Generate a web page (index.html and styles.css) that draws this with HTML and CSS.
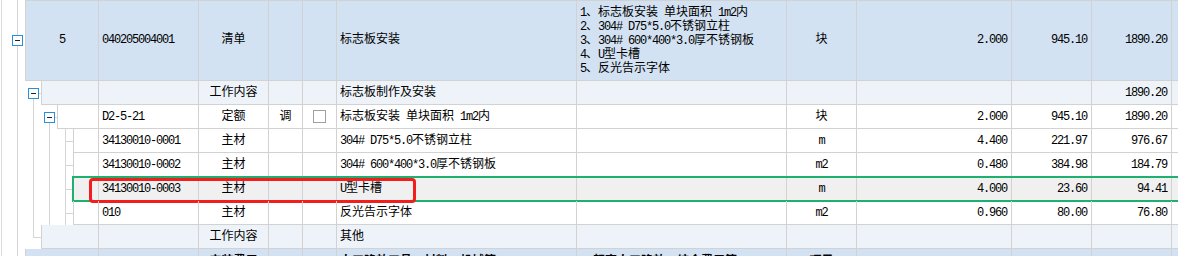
FILE: index.html
```html
<!DOCTYPE html>
<html lang="zh-CN">
<head>
  <meta charset="UTF-8">
  <title>分部分项</title>
  <link rel="stylesheet" href="styles.css">
</head>
<body>
  <div class="grid">
    <!-- 清单行 -->
    <div class="row head l1">
      <div class="tree"><span class="slot v"><i class="fold"></i></span></div>
      <div class="body">
        <div class="c no en">5</div>
        <div class="c code en">040205004001</div>
        <div class="c type">清单</div>
        <div class="c adj"></div>
        <div class="c chk"></div>
        <div class="c name">标志板安装</div>
        <div class="c spec">
          <div><span class="en">1</span>、标志板安装<span class="en"> </span>单块面积<span class="en"> 1m2</span>内</div>
          <div><span class="en">2</span>、<span class="en">304# D75*5.0</span>不锈钢立柱</div>
          <div><span class="en">3</span>、<span class="en">304# 600*400*3.0</span>厚不锈钢板</div>
          <div><span class="en">4</span>、<span class="en">U</span>型卡槽</div>
          <div><span class="en">5</span>、反光告示字体</div>
        </div>
        <div class="c unit">块</div>
        <div class="c qty en">2.000</div>
        <div class="c price en">945.10</div>
        <div class="c total en">1890.20</div>
        <div class="c rest"></div>
      </div>
    </div>

    <div class="row work l2">
      <div class="tree"><span class="slot v"></span><span class="slot dt"><i class="fold"></i></span></div>
      <div class="body">
        <div class="c no"></div>
        <div class="c code"></div>
        <div class="c type">工作内容</div>
        <div class="c adj"></div>
        <div class="c chk"></div>
        <div class="c name">标志板制作及安装</div>
        <div class="c spec"></div>
        <div class="c unit"></div>
        <div class="c qty"></div>
        <div class="c price"></div>
        <div class="c total en">1890.20</div>
        <div class="c rest"></div>
      </div>
    </div>

    <div class="row l3">
      <div class="tree"><span class="slot v"></span><span class="slot v"></span><span class="slot dt"><i class="fold"></i></span></div>
      <div class="body">
        <div class="c no"></div>
        <div class="c code en">D2-5-21</div>
        <div class="c type">定额</div>
        <div class="c adj">调</div>
        <div class="c chk"><i class="box"></i></div>
        <div class="c name">标志板安装<span class="en"> </span>单块面积<span class="en"> 1m2</span>内</div>
        <div class="c spec"></div>
        <div class="c unit">块</div>
        <div class="c qty en">2.000</div>
        <div class="c price en">945.10</div>
        <div class="c total en">1890.20</div>
        <div class="c rest"></div>
      </div>
    </div>

    <div class="row l4">
      <div class="tree"><span class="slot v"></span><span class="slot v"></span><span class="slot v"></span><span class="slot vt"></span></div>
      <div class="body">
        <div class="c no"></div>
        <div class="c code en">34130010-0001</div>
        <div class="c type">主材</div>
        <div class="c adj"></div>
        <div class="c chk"></div>
        <div class="c name"><span class="en">304# D75*5.0</span>不锈钢立柱</div>
        <div class="c spec"></div>
        <div class="c unit en">m</div>
        <div class="c qty en">4.400</div>
        <div class="c price en">221.97</div>
        <div class="c total en">976.67</div>
        <div class="c rest"></div>
      </div>
    </div>

    <div class="row l4">
      <div class="tree"><span class="slot v"></span><span class="slot v"></span><span class="slot v"></span><span class="slot vt"></span></div>
      <div class="body">
        <div class="c no"></div>
        <div class="c code en">34130010-0002</div>
        <div class="c type">主材</div>
        <div class="c adj"></div>
        <div class="c chk"></div>
        <div class="c name"><span class="en">304# 600*400*3.0</span>厚不锈钢板</div>
        <div class="c spec"></div>
        <div class="c unit en">m2</div>
        <div class="c qty en">0.480</div>
        <div class="c price en">384.98</div>
        <div class="c total en">184.79</div>
        <div class="c rest"></div>
      </div>
    </div>

    <div class="row sel l4">
      <div class="tree"><span class="slot v"></span><span class="slot v"></span><span class="slot v"></span><span class="slot vt"></span></div>
      <div class="body">
        <div class="c no"></div>
        <div class="c code en">34130010-0003</div>
        <div class="c type">主材</div>
        <div class="c adj"></div>
        <div class="c chk"></div>
        <div class="c name"><span class="en">U</span>型卡槽</div>
        <div class="c spec"></div>
        <div class="c unit en">m</div>
        <div class="c qty en">4.000</div>
        <div class="c price en">23.60</div>
        <div class="c total en">94.41</div>
        <div class="c rest"></div>
      </div>
      <div class="mark"></div>
    </div>

    <div class="row l4">
      <div class="tree"><span class="slot v"></span><span class="slot v"></span><span class="slot v"></span><span class="slot vt"></span></div>
      <div class="body">
        <div class="c no"></div>
        <div class="c code en">010</div>
        <div class="c type">主材</div>
        <div class="c adj"></div>
        <div class="c chk"></div>
        <div class="c name">反光告示字体</div>
        <div class="c spec"></div>
        <div class="c unit en">m2</div>
        <div class="c qty en">0.960</div>
        <div class="c price en">80.00</div>
        <div class="c total en">76.80</div>
        <div class="c rest"></div>
      </div>
    </div>

    <div class="row work l2">
      <div class="tree"><span class="slot v"></span><span class="slot ut"></span></div>
      <div class="body">
        <div class="c no"></div>
        <div class="c code"></div>
        <div class="c type">工作内容</div>
        <div class="c adj"></div>
        <div class="c chk"></div>
        <div class="c name">其他</div>
        <div class="c spec"></div>
        <div class="c unit"></div>
        <div class="c qty"></div>
        <div class="c price"></div>
        <div class="c total"></div>
        <div class="c rest"></div>
      </div>
    </div>

    <!-- 下一条清单，只露出顶部 -->
    <div class="row head tail l1">
      <div class="tree"><span class="slot v"></span></div>
      <div class="body">
        <div class="c no"></div>
        <div class="c code"></div>
        <div class="c type">安装费用</div>
        <div class="c adj"></div>
        <div class="c chk"></div>
        <div class="c name">人工降效工具、材料、机械等</div>
        <div class="c spec">超高人工降效、综合费用等</div>
        <div class="c unit">项目</div>
        <div class="c qty"></div>
        <div class="c price"></div>
        <div class="c total"></div>
        <div class="c rest"></div>
      </div>
    </div>
  </div>
</body>
</html>
```

FILE: styles.css
```css
html, body {
  margin: 0;
  padding: 0;
  height: 256px;
  overflow: hidden;
  background-color: #fff;
}
body {
  font-family: "Liberation Mono", "Noto Sans CJK SC", monospace;
  font-size: 12px;
  color: #000;
}
.grid {
  width: 1200px;
}
.row {
  display: flex;
  height: 24px;
  position: relative;
}
.row.head {
  height: 81px;
}
.l1 { --t: 25px; }
.l2 { --t: 41px; }
.l3 { --t: 57px; }
.l4 { --t: 73px; }

/* 树形引导线 */
.tree {
  flex: none;
  width: var(--t);
  box-sizing: border-box;
  padding-left: 9px;
  display: flex;
  background: linear-gradient(#dcdcdc, #dcdcdc) 1px 0 / 1px 100% no-repeat;
}
.slot {
  flex: none;
  width: 16px;
  box-sizing: border-box;
  padding-left: 3px;
  display: flex;
  align-items: center;
  background-repeat: no-repeat;
}
.slot.v {
  background-image: linear-gradient(#d6d6d6, #d6d6d6);
  background-position: 8px 0;
  background-size: 1px 100%;
}
.slot.vt {
  background-image: linear-gradient(#d6d6d6, #d6d6d6), linear-gradient(#d6d6d6, #d6d6d6);
  background-position: 8px 0, 8px 50%;
  background-size: 1px 100%, 8px 1px;
}
.slot.dt {
  background-image: linear-gradient(#d6d6d6, #d6d6d6), linear-gradient(#d6d6d6, #d6d6d6);
  background-position: 8px 100%, 8px 50%;
  background-size: 1px 50%, 8px 1px;
}
.slot.ut {
  background-image: linear-gradient(#d6d6d6, #d6d6d6), linear-gradient(#d6d6d6, #d6d6d6);
  background-position: 8px 0, 8px 50%;
  background-size: 1px 50%, 8px 1px;
}
.fold {
  width: 11px;
  height: 11px;
  box-sizing: border-box;
  border: 1px solid #2a8ed8;
  background-color: #fff;
  display: flex;
  align-items: center;
  justify-content: center;
}
.fold::before {
  content: "";
  width: 5px;
  height: 1px;
  background-color: #222;
}

/* 单元格 */
.body {
  flex: 1;
  display: flex;
  min-width: 0;
}
.c {
  flex: none;
  box-sizing: border-box;
  border-right: 1px solid #d2d2d2;
  border-bottom: 1px solid #d2d2d2;
  padding: 0 3px;
  line-height: 24px;
  white-space: nowrap;
  overflow: hidden;
}
.head .c {
  border-top: 1px solid #d2d2d2;
  line-height: 79px;
}
.en,
.c.en {
  letter-spacing: -1.2px;
}
.no {
  width: calc(99px - var(--t));
  border-left: 1px solid #d2d2d2;
  text-align: center;
}
.code { width: 100px; }
.type { width: 70px; text-align: center; }
.adj { width: 34px; text-align: center; }
.chk {
  width: 34px;
  display: flex;
  align-items: center;
  justify-content: center;
}
.name { width: 240px; }
.head .spec {
  width: 210px;
  display: flex;
  flex-direction: column;
  justify-content: center;
  line-height: 14px;
}
.spec { width: 210px; }
.unit { width: 70px; text-align: center; }
.qty { width: 155px; text-align: right; padding-right: 4px; }
.price { width: 80px; text-align: right; padding-right: 4px; }
.total { width: 80px; text-align: right; padding-right: 4px; }
.rest { flex: 1; }

.box {
  width: 13px;
  height: 13px;
  box-sizing: border-box;
  border: 1px solid #a0a0a0;
  background-color: #fff;
}

/* 行状态 */
.head .body {
  background-color: #d3e2f2;
}
.work .body {
  background-color: #eef3f9;
}
.sel .body {
  background-color: #f0f0f0;
  outline: 2px solid #1fb070;
  outline-offset: -1px;
}
.tail .c,
.tail .spec {
  display: block;
  padding-top: 6px;
  line-height: 14px;
  font-weight: bold;
  border-top: none;
}
.tail .spec {
  padding-left: 16px;
}

/* 红色标注框 */
.mark {
  position: absolute;
  left: 89px;
  top: 1px;
  width: 327px;
  height: 25px;
  box-sizing: border-box;
  border: 3px solid #f21d1d;
  border-radius: 4px;
  pointer-events: none;
}
```
